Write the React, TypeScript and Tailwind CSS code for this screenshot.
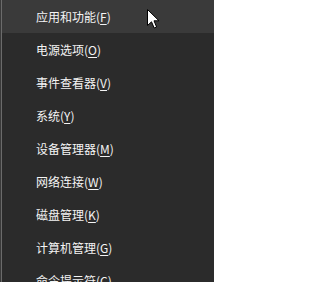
import React from "react";

type Item = {
  label: string;
  key: string;
};

const items: Item[] = [
  { label: "应用和功能", key: "F" },
  { label: "电源选项", key: "O" },
  { label: "事件查看器", key: "V" },
  { label: "系统", key: "Y" },
  { label: "设备管理器", key: "M" },
  { label: "网络连接", key: "W" },
  { label: "磁盘管理", key: "K" },
  { label: "计算机管理", key: "G" },
  { label: "命令提示符", key: "C" },
];

function Cursor() {
  return (
    <svg
      className="absolute left-[147px] top-[9px]"
      width="13"
      height="20"
      viewBox="0 0 13 20"
    >
      <path
        d="M0.5 0.5 L0.5 16.5 L4.5 12.8 L7.2 19 L9.6 18 L7 11.8 L12 11.8 Z"
        fill="#ffffff"
        stroke="#000000"
        strokeWidth="1"
        strokeLinejoin="miter"
      />
    </svg>
  );
}

export default function App() {
  return (
    <div className="relative w-[214px] h-[282px] overflow-hidden bg-[#333333] flex">
      <div className="w-px bg-[#3a3a3a]" />
      <div className="w-px bg-[#6b6b6b]" />
      <div
        className="flex-1 flex flex-col bg-[#2b2b2b] text-[12px] text-[#f4f4f4]"
        style={{ fontFamily: '"Noto Sans CJK SC", "Microsoft YaHei", sans-serif' }}
      >
        {items.map((item, i) => (
          <div
            key={item.key}
            className={
              "h-[33px] shrink-0 flex items-center pl-[34px] " +
              (i === 0 ? "bg-[#3a3a3a]" : "")
            }
          >
            <span className="leading-none whitespace-nowrap">
              {item.label}(<span className="underline underline-offset-2">{item.key}</span>)
            </span>
          </div>
        ))}
      </div>
      <Cursor />
    </div>
  );
}
